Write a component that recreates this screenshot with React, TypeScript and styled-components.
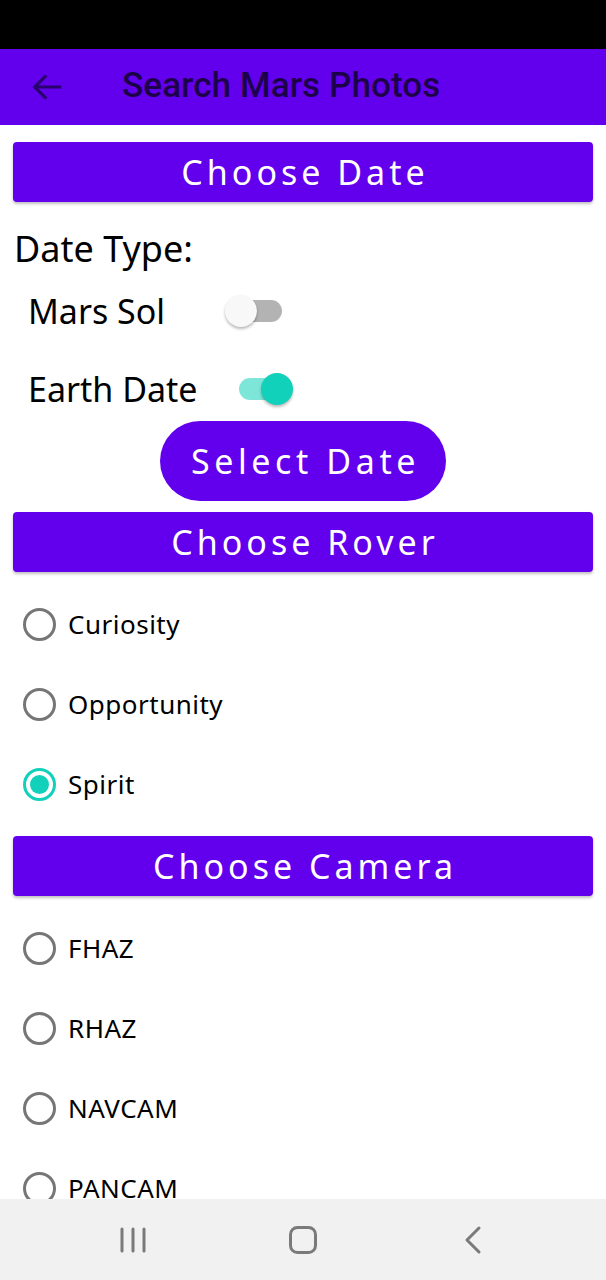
import React from "react";
import styled, { createGlobalStyle } from "styled-components";

const Global = createGlobalStyle`
  html, body { margin: 0; padding: 0; background: #ffffff; }
  body { font-family: "Noto Sans", "Open Sans", sans-serif; }
  * { box-sizing: border-box; }
`;

const PURPLE = "#6200ee";
const TEAL = "#12d1bb";

const Screen = styled.div`
  width: 606px;
  height: 1280px;
  display: flex;
  flex-direction: column;
  overflow: hidden;
  background: #fff;
`;

const StatusBar = styled.div`
  height: 49px;
  flex: none;
  background: #000;
`;

const Toolbar = styled.header`
  height: 76px;
  flex: none;
  background: ${PURPLE};
  display: flex;
  align-items: center;
  padding-left: 28px;
  gap: 54px;
`;

const BackIcon = styled.svg`
  width: 40px;
  height: 40px;
  flex: none;
`;

const Title = styled.h1`
  margin: 0 0 3px;
  font-family: Roboto, "Noto Sans", sans-serif;
  font-weight: 500;
  font-size: 35px;
  color: #1d004a;
  letter-spacing: 0.1px;
`;

const Content = styled.main`
  flex: 1;
  overflow: hidden;
  padding: 17px 13px 0;
  display: flex;
  flex-direction: column;
  & > * { flex-shrink: 0; }
`;

const SectionBar = styled.div<{ $mt?: number }>`
  height: 60px;
  margin-top: ${(p) => p.$mt ?? 0}px;
  background: ${PURPLE};
  border-radius: 4px;
  box-shadow: 0 2px 3px rgba(0, 0, 0, 0.25);
  display: flex;
  align-items: center;
  justify-content: center;
  color: #fff;
  font-size: 34px;
  letter-spacing: 4px;
  padding-left: 4px;
`;

const DateTypeLabel = styled.div`
  margin-top: 25px;
  line-height: 44px;
  font-size: 36px;
  color: #000;
  padding-left: 1px;
`;

const SwitchRow = styled.div<{ $mt: number }>`
  height: 60px;
  margin-top: ${(p) => p.$mt}px;
  display: flex;
  align-items: center;
  padding-left: 15px;
`;

const SwitchLabel = styled.span<{ $w: number }>`
  width: ${(p) => p.$w}px;
  flex: none;
  font-size: 34px;
  color: #000;
`;

const SwitchTrack = styled.div<{ $on: boolean }>`
  position: relative;
  width: 48px;
  height: 22px;
  border-radius: 11px;
  background: ${(p) => (p.$on ? "#7ee6d9" : "#b3b3b3")};
  margin-left: ${(p) => (p.$on ? 2 : 7)}px;
`;

const SwitchThumb = styled.div<{ $on: boolean }>`
  position: absolute;
  top: 50%;
  width: 32px;
  height: 32px;
  border-radius: 50%;
  transform: translateY(-50%);
  left: ${(p) => (p.$on ? "22px" : "-9px")};
  background: ${(p) => (p.$on ? TEAL : "#f8f8f8")};
  box-shadow: 0 2px 3px rgba(0, 0, 0, 0.28);
`;

const PillButton = styled.button`
  align-self: center;
  margin-top: 2px;
  width: 286px;
  height: 80px;
  border: none;
  border-radius: 40px;
  background: ${PURPLE};
  color: #fff;
  font-family: "Noto Sans", sans-serif;
  font-size: 34px;
  letter-spacing: 4.6px;
  padding: 0 0 0 5px;
`;

const RadioList = styled.div`
  padding: 12px 0;
  display: flex;
  flex-direction: column;
`;

const RadioRow = styled.label`
  height: 80px;
  display: flex;
  align-items: center;
  padding-left: 10px;
  gap: 12px;
`;

const RadioCircle = styled.span<{ $checked: boolean }>`
  width: 33px;
  height: 33px;
  flex: none;
  border-radius: 50%;
  border: 3px solid ${(p) => (p.$checked ? TEAL : "#767676")};
  display: flex;
  align-items: center;
  justify-content: center;
  &::after {
    content: "";
    width: 19px;
    height: 19px;
    border-radius: 50%;
    background: ${TEAL};
    display: ${(p) => (p.$checked ? "block" : "none")};
  }
`;

const RadioText = styled.span`
  font-size: 26px;
  color: #000;
  letter-spacing: 0.5px;
`;

const NavBar = styled.nav`
  height: 81px;
  flex: none;
  background: #f1f1f1;
  display: grid;
  grid-template-columns: repeat(3, 170px);
  justify-content: center;
  align-items: center;
  justify-items: center;
`;

const NavIcon = styled.svg`
  width: 40px;
  height: 40px;
`;

const Switch = ({ on }: { on: boolean }) => (
  <SwitchTrack $on={on}>
    <SwitchThumb $on={on} />
  </SwitchTrack>
);

const Radio = ({ label, checked = false }: { label: string; checked?: boolean }) => (
  <RadioRow>
    <RadioCircle $checked={checked} />
    <RadioText>{label}</RadioText>
  </RadioRow>
);

export default function App() {
  return (
    <Screen>
      <Global />
      <StatusBar />
      <Toolbar>
        <BackIcon viewBox="0 0 24 24" fill="none" stroke="rgba(20,0,60,0.72)" strokeWidth="1.9">
          <path d="M20 12H4.5M11 5l-7 7 7 7" />
        </BackIcon>
        <Title>Search Mars Photos</Title>
      </Toolbar>
      <Content>
        <SectionBar>Choose Date</SectionBar>
        <DateTypeLabel>Date Type:</DateTypeLabel>
        <SwitchRow $mt={10}>
          <SwitchLabel $w={199}>Mars Sol</SwitchLabel>
          <Switch on={false} />
        </SwitchRow>
        <SwitchRow $mt={18}>
          <SwitchLabel $w={209}>Earth Date</SwitchLabel>
          <Switch on={true} />
        </SwitchRow>
        <PillButton>Select Date</PillButton>
        <SectionBar $mt={11}>Choose Rover</SectionBar>
        <RadioList>
          <Radio label="Curiosity" />
          <Radio label="Opportunity" />
          <Radio label="Spirit" checked />
        </RadioList>
        <SectionBar>Choose Camera</SectionBar>
        <RadioList>
          <Radio label="FHAZ" />
          <Radio label="RHAZ" />
          <Radio label="NAVCAM" />
          <Radio label="PANCAM" />
        </RadioList>
      </Content>
      <NavBar>
        <NavIcon viewBox="0 0 40 40" fill="none" stroke="#7a7a7a" strokeWidth="3" strokeLinecap="round">
          <path d="M9 9v22M20 9v22M31 9v22" />
        </NavIcon>
        <NavIcon viewBox="0 0 40 40" fill="none" stroke="#7a7a7a" strokeWidth="3">
          <rect x="7.5" y="7.5" width="25" height="25" rx="7" />
        </NavIcon>
        <NavIcon viewBox="0 0 40 40" fill="none" stroke="#7a7a7a" strokeWidth="3" strokeLinecap="round" strokeLinejoin="round">
          <path d="M26 8L14 20l12 12" />
        </NavIcon>
      </NavBar>
    </Screen>
  );
}
